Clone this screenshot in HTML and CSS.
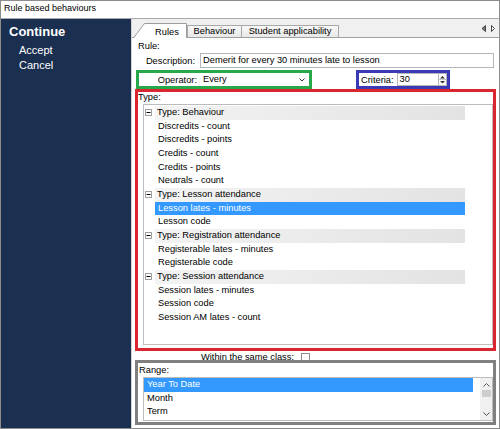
FILE: index.html
```html
<!DOCTYPE html>
<html>
<head>
<meta charset="utf-8">
<link rel="stylesheet" href="styles.css">
</head>
<body>
<div class="window">
  <div class="titlebar">Rule based behaviours</div>
  <div class="body">
    <nav class="sidebar">
      <div class="side-title">Continue</div>
      <div class="side-link">Accept</div>
      <div class="side-link">Cancel</div>
    </nav>
    <main class="main">
      <div class="tabs">
        <div class="tab-active">
          <svg class="tab-shape" width="54" height="15" viewBox="0 0 54 15"><path d="M0.5 15 L11.5 0.5 H53.5 V15" fill="#fff" stroke="#9c9c9c"/></svg>
          <span class="tab-label">Rules</span>
        </div>
        <div class="tab tab-behaviour">Behaviour</div>
        <div class="tab tab-student">Student applicability</div>
        <div class="tab-arrows">
          <svg width="14" height="7" viewBox="0 0 14 7"><path d="M4.5 0.5 L1 3.5 L4.5 6.5 Z" fill="#777" stroke="#444"/><path d="M10.5 0.5 L13.5 3.5 L10.5 6.5 Z" fill="#fff" stroke="#444"/></svg>
        </div>
      </div>
      <div class="content">
        <div class="rule-label">Rule:</div>
        <div class="field-row">
          <span class="field-label">Description:</span>
          <div class="textbox">Demerit for every 30 minutes late to lesson</div>
        </div>
        <div class="op-row">
          <div class="hl hl-green">
            <span class="op-label">Operator:</span>
            <div class="select"><span>Every</span><svg width="6" height="4" viewBox="0 0 6 4"><polyline points="0.5,0.5 3,3 5.5,0.5" fill="none" stroke="#333"/></svg></div>
          </div>
          <div class="hl hl-blue">
            <span class="crit-label">Criteria:</span>
            <div class="numbox">30</div>
            <div class="spinner"><svg width="7" height="11" viewBox="0 0 7 11"><path d="M1 4.5 L3.5 2 L6 4.5 Z" fill="#333"/><line x1="0" y1="5.5" x2="7" y2="5.5" stroke="#c8c8c8"/><path d="M1 7 L3.5 9.5 L6 7 Z" fill="#333"/></svg></div>
          </div>
        </div>
        <div class="hl hl-red type-box">
          <div class="group-label">Type:</div>
          <div class="tree">
            <div class="row row-head"><svg class="toggle" width="7" height="7" viewBox="0 0 7 7"><rect x="0.5" y="0.5" width="6" height="6" fill="#fff" stroke="#a0a0a0"/><line x1="1.5" y1="3.5" x2="5.5" y2="3.5" stroke="#000"/></svg><span class="head-label">Type: Behaviour</span></div>
            <div class="row row-item">Discredits - count</div>
            <div class="row row-item">Discredits - points</div>
            <div class="row row-item">Credits - count</div>
            <div class="row row-item">Credits - points</div>
            <div class="row row-item">Neutrals - count</div>
            <div class="row row-head"><svg class="toggle" width="7" height="7" viewBox="0 0 7 7"><rect x="0.5" y="0.5" width="6" height="6" fill="#fff" stroke="#a0a0a0"/><line x1="1.5" y1="3.5" x2="5.5" y2="3.5" stroke="#000"/></svg><span class="head-label">Type: Lesson attendance</span></div>
            <div class="row row-item selected">Lesson lates - minutes</div>
            <div class="row row-item">Lesson code</div>
            <div class="row row-head"><svg class="toggle" width="7" height="7" viewBox="0 0 7 7"><rect x="0.5" y="0.5" width="6" height="6" fill="#fff" stroke="#a0a0a0"/><line x1="1.5" y1="3.5" x2="5.5" y2="3.5" stroke="#000"/></svg><span class="head-label">Type: Registration attendance</span></div>
            <div class="row row-item">Registerable lates - minutes</div>
            <div class="row row-item">Registerable code</div>
            <div class="row row-head"><svg class="toggle" width="7" height="7" viewBox="0 0 7 7"><rect x="0.5" y="0.5" width="6" height="6" fill="#fff" stroke="#a0a0a0"/><line x1="1.5" y1="3.5" x2="5.5" y2="3.5" stroke="#000"/></svg><span class="head-label">Type: Session attendance</span></div>
            <div class="row row-item">Session lates - minutes</div>
            <div class="row row-item">Session code</div>
            <div class="row row-item">Session AM lates - count</div>
          </div>
        </div>
        <div class="within-row"><span class="within-label">Within the same class:</span><span class="checkbox"></span></div>
        <div class="hl hl-grey range-box">
          <div class="group-label range-label">Range:</div>
          <div class="listbox">
            <div class="list-rows">
              <div class="list-row selected">Year To Date</div>
              <div class="list-row">Month</div>
              <div class="list-row">Term</div>
            </div>
            <div class="scrollbar">
              <svg class="sb-up" width="7" height="4" viewBox="0 0 7 4"><polyline points="0.5,3.5 3.5,0.5 6.5,3.5" fill="none" stroke="#555"/></svg>
              <div class="sb-thumb"></div>
              <svg class="sb-down" width="7" height="4" viewBox="0 0 7 4"><polyline points="0.5,0.5 3.5,3.5 6.5,0.5" fill="none" stroke="#555"/></svg>
            </div>
          </div>
        </div>
      </div>
    </main>
  </div>
</div>
</body>
</html>
```
FILE: styles.css
```css
html, body {
  margin: 0;
  padding: 0;
}
body {
  font-family: "Liberation Sans", Arial, sans-serif;
  font-size: 9.3px;
  color: #000;
  background: #fff;
}
.window {
  width: 500px;
  height: 429px;
  box-sizing: border-box;
  border: 1px solid #8c8c8c;
  display: flex;
  flex-direction: column;
  background: #fff;
  overflow: hidden;
}
.titlebar {
  flex: none;
  height: 17px;
  line-height: 15px;
  padding-left: 3px;
  font-size: 9px;
  border-bottom: 1px solid #a9a9a9;
  background: #fff;
}
.body {
  flex: 1;
  display: flex;
  min-height: 0;
}
.sidebar {
  flex: none;
  width: 130px;
  box-sizing: border-box;
  padding-top: 5px;
  background: #1b2f50;
  color: #fff;
}
.side-title {
  font-size: 13px;
  font-weight: bold;
  line-height: 16px;
  padding-left: 8px;
  margin-bottom: 3px;
}
.side-link {
  font-size: 11px;
  line-height: 15px;
  padding-left: 18px;
}
.main {
  flex: 1;
  min-width: 0;
  display: flex;
  flex-direction: column;
  border-left: 1px solid #d4d4d4;
  background: #fff;
}
.tabs {
  flex: none;
  height: 18px;
  display: flex;
  align-items: flex-end;
  padding-left: 1px;
  border-bottom: 1px solid #a0a0a0;
  background: #f0f0f0;
}
.tab-active {
  position: relative;
  z-index: 1;
  width: 54px;
  height: 15px;
  margin-bottom: -1px;
}
.tab-shape {
  position: absolute;
  left: 0;
  top: 0;
}
.tab-label {
  position: relative;
  display: block;
  padding: 3px 0 0 14px;
  line-height: 12px;
  text-align: center;
}
.tab {
  height: 12px;
  box-sizing: border-box;
  line-height: 11px;
  border: 1px solid #a8a8a8;
  border-bottom: none;
  background: linear-gradient(#f8f8f8, #e8e8e8);
  text-align: center;
}
.tab-behaviour {
  width: 55px;
}
.tab-student {
  width: 98px;
  margin-left: -1px;
}
.tab-arrows {
  align-self: flex-start;
  margin: 6px 4px 0 auto;
  height: 7px;
}
.tab-arrows svg {
  display: block;
}
.content {
  flex: 1;
  display: flex;
  flex-direction: column;
  background: #fff;
}
.rule-label {
  margin: 3px 0 0 6px;
  line-height: 11px;
}
.field-row {
  display: flex;
  align-items: center;
  height: 15px;
  margin-top: 1px;
}
.field-label {
  width: 63px;
  margin-right: 5px;
  text-align: right;
}
.textbox {
  width: 294px;
  height: 15px;
  box-sizing: border-box;
  border: 1px solid #b4b6bc;
  padding-left: 2px;
  line-height: 13px;
  background: #fff;
}
.op-row {
  display: flex;
  height: 19px;
  margin-top: 2px;
}
.hl {
  box-sizing: border-box;
  border: 3px solid;
}
.hl-green {
  width: 176px;
  margin-left: 4px;
  border-color: #27a84a;
  display: flex;
  align-items: center;
}
.op-label {
  width: 58px;
  margin-right: 3px;
  text-align: right;
}
.select {
  width: 107px;
  height: 13px;
  box-sizing: border-box;
  padding: 0 2px 0 3px;
  line-height: 13px;
  background: #fff;
  display: flex;
  justify-content: space-between;
  align-items: center;
}
.select svg {
  display: block;
}
.hl-blue {
  width: 94px;
  margin-left: 44px;
  border-color: #3a3ab4;
  display: flex;
  align-items: center;
}
.crit-label {
  margin: 0 3px 0 2px;
}
.numbox {
  flex: 1;
  height: 13px;
  box-sizing: border-box;
  border: 1px solid #b4b6bc;
  border-right: none;
  padding-left: 2px;
  line-height: 11px;
  background: #fff;
}
.spinner {
  width: 9px;
  height: 13px;
  box-sizing: border-box;
  border: 1px solid #b4b6bc;
  background: #fff;
}
.spinner svg {
  display: block;
}
.type-box {
  width: 361px;
  height: 262px;
  margin-left: 3px;
  border-color: #d9262f;
}
.group-label {
  line-height: 11px;
}
.tree {
  width: 350px;
  height: 241px;
  box-sizing: border-box;
  margin: 1px 0 0 5px;
  padding-top: 1px;
  border: 1px solid #bcbcbc;
  background: #fff;
}
.row {
  height: 13.67px;
  line-height: 13.67px;
  display: flex;
  align-items: center;
  white-space: nowrap;
}
.toggle {
  display: block;
  flex: none;
  margin: 0 3px 0 1px;
}
.head-label {
  width: 310px;
  box-sizing: border-box;
  padding-left: 2px;
  background: linear-gradient(to right, #f3f3f3, #e3e3e3);
}
.row-item {
  width: 310px;
  box-sizing: border-box;
  margin-left: 11px;
  padding-left: 3px;
}
.selected {
  background: #3399ff;
  color: #fff;
}
.within-row {
  height: 9px;
  display: flex;
  align-items: flex-start;
  padding-left: 69px;
}
.within-label {
  line-height: 13px;
}
.checkbox {
  width: 9px;
  height: 8px;
  box-sizing: border-box;
  margin: 2px 0 0 7px;
  border: 1px solid #8f8f8f;
  background: #fff;
}
.range-box {
  width: 361px;
  height: 65px;
  margin-left: 3px;
  border-color: #808080;
}
.range-label {
  margin: 2px 0 0 1px;
}
.listbox {
  width: 350px;
  height: 44px;
  box-sizing: border-box;
  margin: 1px 0 0 5px;
  border: 1px solid #bcbcbc;
  background: #fff;
  display: flex;
  justify-content: space-between;
}
.list-rows {
  width: 329px;
}
.list-row {
  height: 13.67px;
  line-height: 13.67px;
  padding-left: 3px;
}
.scrollbar {
  width: 12px;
  background: #f0f0f0;
  display: flex;
  flex-direction: column;
  align-items: center;
}
.sb-up {
  display: block;
  margin-top: 5px;
}
.sb-thumb {
  width: 9px;
  height: 7px;
  margin-top: 3px;
  background: #cdcdcd;
}
.sb-down {
  display: block;
  margin-top: auto;
  margin-bottom: 4px;
}
```
